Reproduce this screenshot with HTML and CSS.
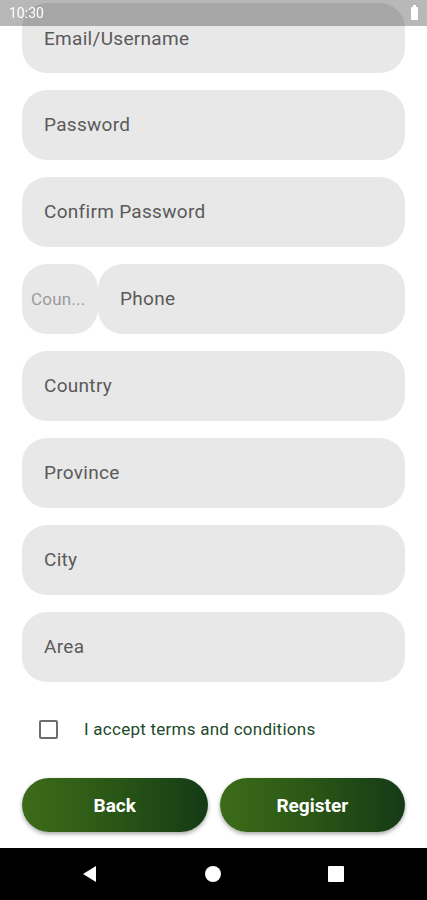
FILE: index.html
```html
<!DOCTYPE html>
<html lang="en">
<head>
    <meta charset="UTF-8">
    <meta name="viewport" content="width=device-width, initial-scale=1.0">
    <title>Register</title>
    <link rel="stylesheet" href="styles.css">
</head>
<body>
    <!-- Status bar sits over the scrolled form -->
    <div class="status-bar">
        <span class="time">10:30</span>
        <span class="battery"></span>
    </div>

    <div class="screen">
        <form class="form">
            <div class="field cut"><span class="placeholder">Email/Username</span></div>
            <div class="field"><span class="placeholder">Password</span></div>
            <div class="field"><span class="placeholder">Confirm Password</span></div>

            <div class="phone-row">
                <div class="field code"><span class="placeholder light">Coun...</span></div>
                <div class="field phone"><span class="placeholder">Phone</span></div>
            </div>

            <div class="field"><span class="placeholder">Country</span></div>
            <div class="field"><span class="placeholder">Province</span></div>
            <div class="field"><span class="placeholder">City</span></div>
            <div class="field"><span class="placeholder">Area</span></div>

            <label class="terms">
                <span class="checkbox"></span>
                <span class="terms-text">I accept terms and conditions</span>
            </label>

            <div class="actions">
                <button type="button" class="btn">Back</button>
                <button type="button" class="btn">Register</button>
            </div>
        </form>
    </div>

    <!-- Android navigation bar -->
    <div class="nav-bar">
        <svg width="18" height="18" viewBox="0 0 18 18"><path d="M15 1 L15 17 L2 9 Z" fill="#fff"/></svg>
        <svg width="18" height="18" viewBox="0 0 18 18"><circle cx="9" cy="9" r="8" fill="#fff"/></svg>
        <svg width="18" height="18" viewBox="0 0 18 18"><rect x="1" y="1" width="16" height="16" rx="1" fill="#fff"/></svg>
    </div>
</body>
</html>
```

FILE: styles.css
```css
/* General Body Style */
body {
    font-family: Roboto, 'Noto Sans', sans-serif;
    background-color: #fff;
    color: #555;
    margin: 0;
    padding: 0;
    width: 427px;
    height: 900px;
    overflow: hidden;
    display: flex;
    flex-direction: column;
}

/* Status Bar */
.status-bar {
    position: fixed;
    top: 0;
    left: 0;
    right: 0;
    height: 26px;
    background-color: rgba(0, 0, 0, 0.28);
    display: flex;
    align-items: center;
    justify-content: space-between;
    padding: 0 9px 0 9px;
    z-index: 2;
}

.time {
    color: #fff;
    font-size: 14px;
}

.battery {
    width: 7px;
    height: 13px;
    background-color: #fff;
    border-radius: 1px;
    position: relative;
    margin-top: 1px;
}

.battery::before {
    content: "";
    position: absolute;
    top: -2px;
    left: 2px;
    width: 3px;
    height: 2px;
    background-color: #fff;
}

/* Form */
.screen {
    flex: 1;
    padding: 3px 22px 0 22px;
}

.form {
    display: flex;
    flex-direction: column;
    gap: 17px;
}

.field {
    height: 70px;
    background-color: #e8e8e8;
    border-radius: 25px;
    display: flex;
    align-items: center;
    padding: 0 22px;
    box-sizing: border-box;
}

/* top field is scrolled half under the status bar */
.field.cut {
    align-items: flex-start;
    padding-top: 25px;
}

.placeholder {
    font-size: 19px;
    letter-spacing: 0.3px;
    color: #5a5a5a;
    margin-top: -1px;
}

.placeholder.light {
    color: #9a9a9a;
    font-size: 17px;
    letter-spacing: 0.2px;
    white-space: nowrap;
}

.phone-row {
    display: flex;
}

.field.code {
    width: 76px;
    padding: 0 9px;
    flex-shrink: 0;
}

.field.phone {
    flex: 1;
}

/* Terms */
.terms {
    display: flex;
    align-items: center;
    gap: 26px;
    padding-left: 17px;
    margin-top: 20px;
}

.checkbox {
    width: 15px;
    height: 15px;
    border: 2px solid #6e6e6e;
    border-radius: 2px;
}

.terms-text {
    font-size: 17px;
    letter-spacing: 0.25px;
    color: #1d4a2a;
}

/* Buttons */
.actions {
    display: flex;
    gap: 12px;
    margin-top: 22px;
}

.btn {
    flex: 1;
    height: 54px;
    border: none;
    border-radius: 27px;
    background: linear-gradient(90deg, #3c6c19 0%, #2a5616 50%, #143a16 100%);
    color: #fff;
    font-family: Roboto, sans-serif;
    font-size: 19px;
    font-weight: bold;
    box-shadow: 0px 2px 4px rgba(0, 0, 0, 0.35);
    cursor: pointer;
}

/* Navigation Bar */
.nav-bar {
    height: 52px;
    background-color: #000;
    display: flex;
    align-items: center;
    justify-content: space-between;
    padding: 0 82px 0 81px;
    flex-shrink: 0;
}
```
